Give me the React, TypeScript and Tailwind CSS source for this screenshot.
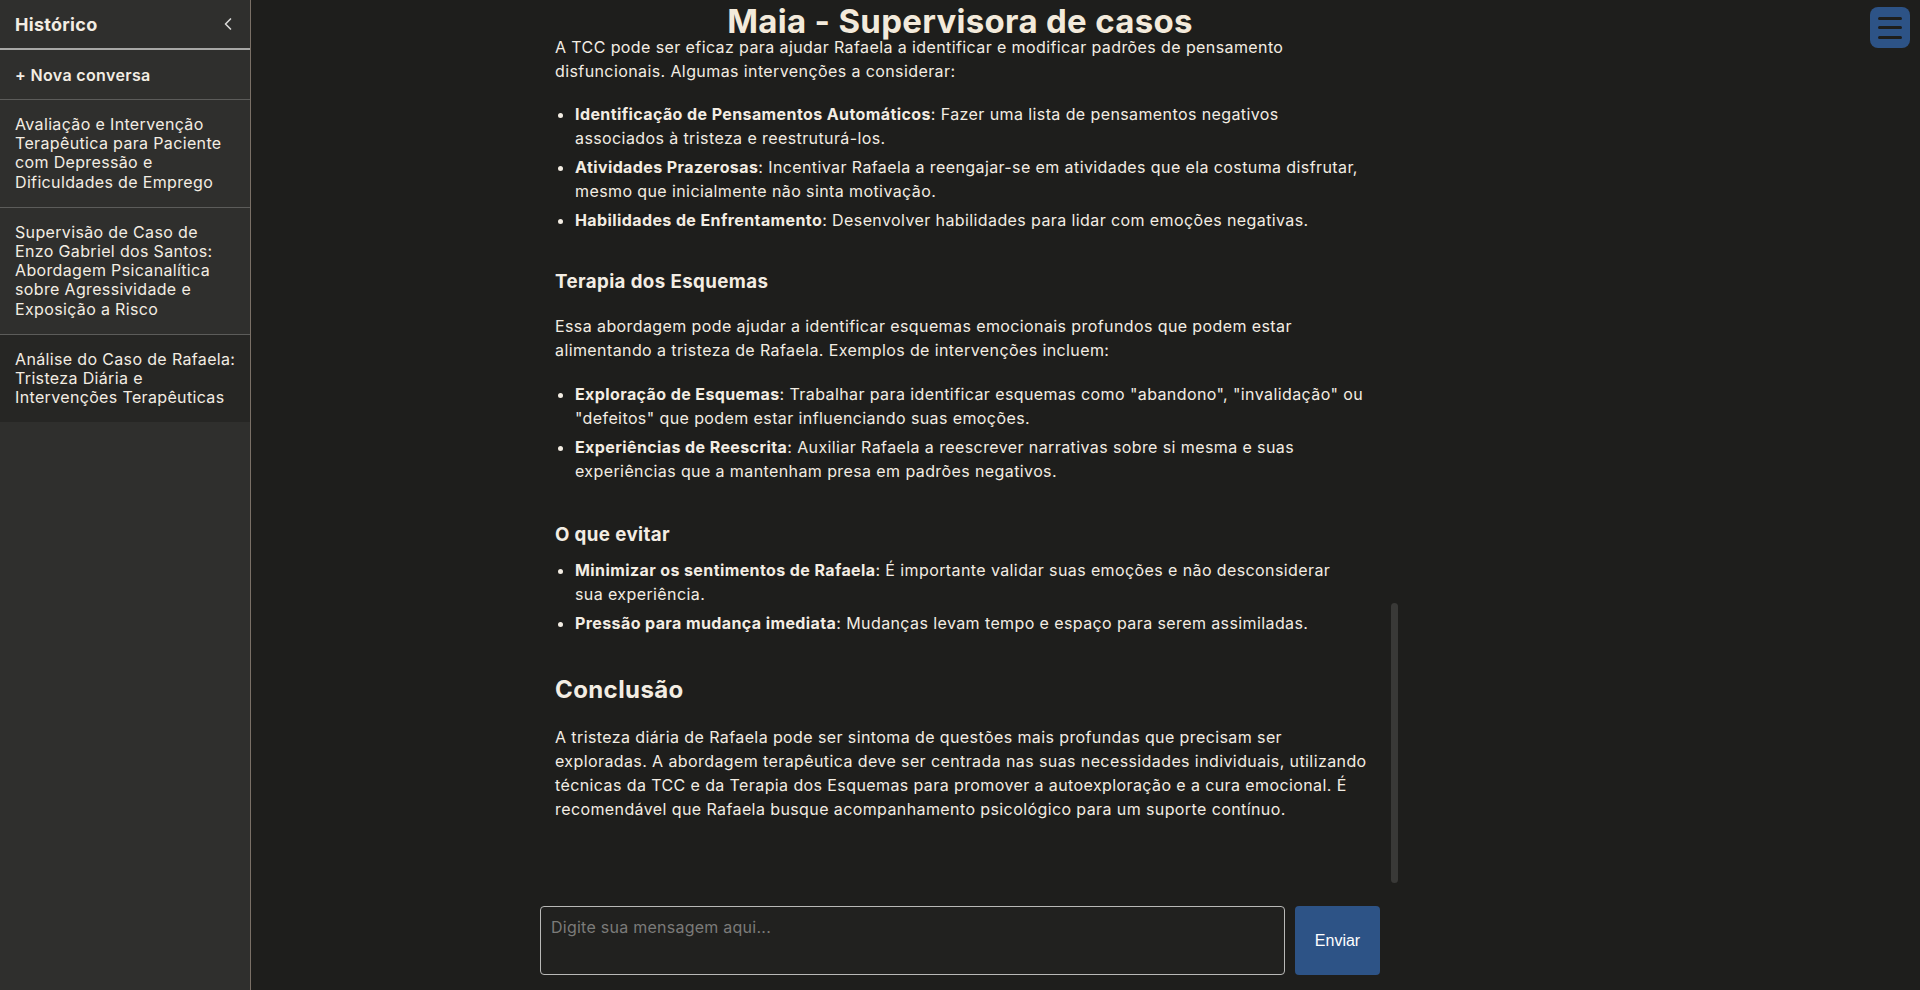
import { Fragment } from 'react'
import { ChevronLeft } from 'lucide-react'

// títulos quebrados como aparecem na lista
const historico = [
  { id: 1, lines: ['Avaliação e Intervenção', 'Terapêutica para Paciente', 'com Depressão e', 'Dificuldades de Emprego'] },
  { id: 2, lines: ['Supervisão de Caso de', 'Enzo Gabriel dos Santos:', 'Abordagem Psicanalítica', 'sobre Agressividade e', 'Exposição a Risco'] },
  { id: 3, lines: ['Análise do Caso de Rafaela:', 'Tristeza Diária e', 'Intervenções Terapêuticas'], active: true },
]

function Lines({ lines }: { lines: string[] }) {
  return (
    <>
      {lines.map((l, i) => (
        <Fragment key={i}>
          {i > 0 && <br />}
          {l}
        </Fragment>
      ))}
    </>
  )
}

function Sidebar() {
  return (
    <aside className="absolute left-0 top-0 z-20 flex h-full w-[251px] flex-col border-r border-[#7a7066] bg-[#2f2f2d] tracking-[0.35px]">
      <div className="flex h-[50px] shrink-0 items-center justify-between border-b-2 border-[#a8a8a6] pl-[15px] pr-[12px]">
        <span className="text-[18px] font-bold tracking-[0.3px]">Histórico</span>
        <ChevronLeft className="size-[20px] text-[#d8d8d6]" strokeWidth={2} />
      </div>
      <button className="flex h-[50px] shrink-0 items-center border-b border-[#5c5c5a] px-[15px] text-left text-[16px] font-semibold">
        + Nova conversa
      </button>
      {historico.map((item) => (
        <div
          key={item.id}
          className={`whitespace-nowrap px-[15px] py-[15px] text-[16px] leading-[1.2] ${
            item.active ? 'bg-[#262624]' : 'border-b border-[#5c5c5a]'
          }`}
        >
          <Lines lines={item.lines} />
        </div>
      ))}
    </aside>
  )
}

function Bullet({ label, children }: { label: string; children: React.ReactNode }) {
  return (
    <li className="mb-[5px] last:mb-0">
      <strong className="font-bold">{label}</strong>: {children}
    </li>
  )
}

export default function App() {
  return (
    <div className="relative h-screen w-full overflow-hidden bg-[#1e1e1c] font-['Inter',sans-serif] text-[#f3ede3]">
      <Sidebar />

      <button className="absolute right-[10px] top-[7px] z-20 flex h-[41px] w-[40px] flex-col items-center justify-center gap-[6.5px] rounded-[8px] bg-[#2d5386]">
        <span className="h-[3px] w-[24px] rounded-full bg-[#1e1e1c]" />
        <span className="h-[3px] w-[24px] rounded-full bg-[#1e1e1c]" />
        <span className="h-[3px] w-[24px] rounded-full bg-[#1e1e1c]" />
      </button>

      <main className="flex h-full flex-col items-center">
        <header className="flex h-[40px] w-full shrink-0 items-start justify-center">
          <h1 className="text-[33px] font-bold leading-[42px] tracking-[0.3px] text-[#f3eadb]">Maia - Supervisora de casos</h1>
        </header>

        <div className="relative min-h-0 w-[880px] flex-1 overflow-hidden">
          <div className="flex h-full flex-col justify-end pb-[65px] pl-[35px] pr-[20px] text-[16px] leading-6 tracking-[0.4px] whitespace-nowrap">
            <p>
              A TCC pode ser eficaz para ajudar Rafaela a identificar e modificar padrões de pensamento<br />
              disfuncionais. Algumas intervenções a considerar:
            </p>
            <ul className="mt-[19px] list-disc pl-[20px]">
              <Bullet label="Identificação de Pensamentos Automáticos">
                Fazer uma lista de pensamentos negativos<br />associados à tristeza e reestruturá-los.
              </Bullet>
              <Bullet label="Atividades Prazerosas">
                Incentivar Rafaela a reengajar-se em atividades que ela costuma disfrutar,<br />mesmo que inicialmente não sinta motivação.
              </Bullet>
              <Bullet label="Habilidades de Enfrentamento">Desenvolver habilidades para lidar com emoções negativas.</Bullet>
            </ul>

            <h3 className="mt-[38px] text-[18.7px] font-bold leading-[23px]">Terapia dos Esquemas</h3>
            <p className="mt-[21px]">
              Essa abordagem pode ajudar a identificar esquemas emocionais profundos que podem estar<br />
              alimentando a tristeza de Rafaela. Exemplos de intervenções incluem:
            </p>
            <ul className="mt-[20px] list-disc pl-[20px]">
              <Bullet label="Exploração de Esquemas">
                Trabalhar para identificar esquemas como "abandono", "invalidação" ou<br />"defeitos" que podem estar influenciando suas emoções.
              </Bullet>
              <Bullet label="Experiências de Reescrita">
                Auxiliar Rafaela a reescrever narrativas sobre si mesma e suas<br />experiências que a mantenham presa em padrões negativos.
              </Bullet>
            </ul>

            <h3 className="mt-[40px] text-[18.7px] font-bold leading-[23px]">O que evitar</h3>
            <ul className="mt-[12px] list-disc pl-[20px]">
              <Bullet label="Minimizar os sentimentos de Rafaela">
                É importante validar suas emoções e não desconsiderar<br />sua experiência.
              </Bullet>
              <Bullet label="Pressão para mudança imediata">Mudanças levam tempo e espaço para serem assimiladas.</Bullet>
            </ul>

            <h2 className="mt-[40px] text-[24px] font-bold leading-[29px]">Conclusão</h2>
            <p className="mt-[21px]">
              A tristeza diária de Rafaela pode ser sintoma de questões mais profundas que precisam ser<br />
              exploradas. A abordagem terapêutica deve ser centrada nas suas necessidades individuais, utilizando<br />
              técnicas da TCC e da Terapia dos Esquemas para promover a autoexploração e a cura emocional. É<br />
              recomendável que Rafaela busque acompanhamento psicológico para um suporte contínuo.
            </p>
          </div>
          {/* barra de rolagem (já no fim da conversa) */}
          <div className="absolute bottom-[3px] right-[2px] h-[280px] w-[7px] rounded-full bg-[#393937]" />
        </div>

        <form className="flex w-[840px] shrink-0 gap-[10px] pb-[15px] pt-[20px]" onSubmit={(e) => e.preventDefault()}>
          <textarea
            placeholder="Digite sua mensagem aqui..."
            className="h-[69px] flex-1 resize-none rounded-[4px] border border-[#b9b9b7] bg-[#21211f] px-[10px] py-[8px] text-[16px] tracking-[0.25px] text-[#f3ede3] outline-none placeholder:text-[#7b7b79]"
          />
          <button
            type="submit"
            className="h-[69px] w-[85px] rounded-[4px] bg-[#2d5386] font-['Liberation_Sans',sans-serif] text-[16px] text-white"
          >
            Enviar
          </button>
        </form>
      </main>
    </div>
  )
}
